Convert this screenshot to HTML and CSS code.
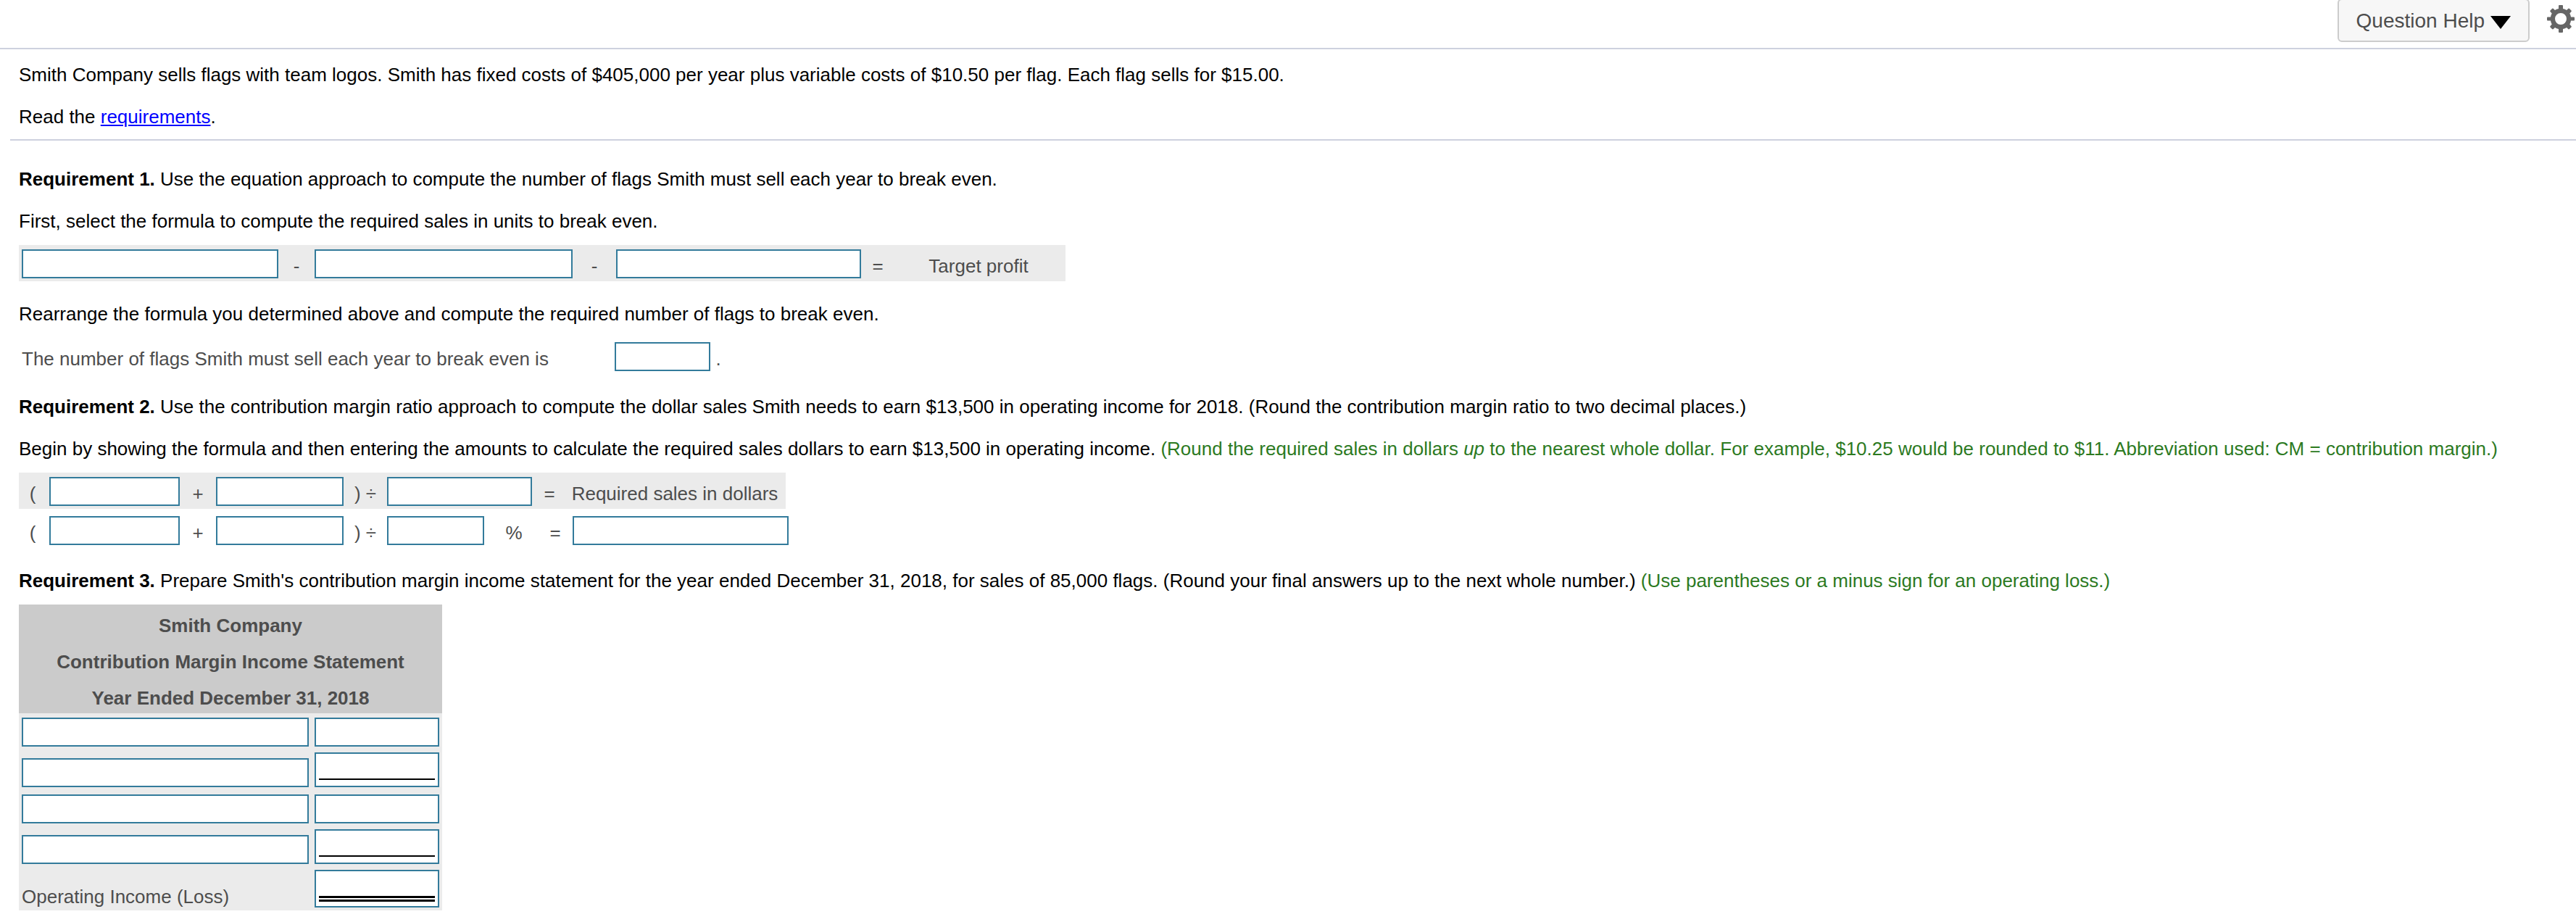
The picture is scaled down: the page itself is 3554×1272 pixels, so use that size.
FILE: index.html
```
<!DOCTYPE html>
<html lang="en">
<head>
  <meta charset="UTF-8">
  <title>Question</title>
  <meta name="viewport" content="width=device-width, initial-scale=1.0">
  <link rel="stylesheet" href="styles.css">
</head>
<body>
  <header class="toolbar">
    <button type="button" class="help-button">Question Help
      <svg class="arrow" viewBox="0 0 28 18"><path d="M0 0H28L14 18Z"/></svg>
    </button>
    <button type="button" class="settings" aria-label="Settings">
      <svg viewBox="0 0 40 40">
        <path class="gear" fill-rule="evenodd" d="M17 2Q17 1 18 1H22Q23 1 23 2V6Q26 6.600 28 8L30.500 5.800Q31.200 5.200 32 6L34.500 8.500Q35.200 9.200 34.500 10L32.300 12.500Q33.700 15 34 17.500H38Q39 17.500 39 18.500V21.500Q39 22.500 38 22.500H34Q33.700 25 32.300 27.500L34.500 30Q35.200 30.800 34.500 31.500L32 34Q31.200 34.800 30.500 34.200L28 32Q26 33.400 23 34V38Q23 39 22 39H18Q17 39 17 38V34Q14 33.400 12 32L9.500 34.200Q8.800 34.800 8 34L5.500 31.500Q4.800 30.800 5.500 30L7.700 27.500Q6.300 25 6 22.500H2Q1 22.500 1 21.500V18.500Q1 17.500 2 17.500H6Q6.300 15 7.700 12.500L5.500 10Q4.800 9.200 5.500 8.500L8 6Q8.800 5.200 9.500 5.800L12 8Q14 6.600 17 6ZM20 12A8 8 0 1 0 20 28A8 8 0 1 0 20 12Z"/>
      </svg>
    </button>
  </header>

  <section class="intro">
    <p>Smith Company sells flags with team logos. Smith has fixed costs of $405,000 per year plus variable costs of $10.50 per flag. Each flag sells for $15.00.</p>
    <p>Read the <a href="#requirements">requirements</a>.</p>
  </section>

  <main class="question" id="requirements">
    <p><b>Requirement 1.</b> Use the equation approach to compute the number of flags Smith must sell each year to break even.</p>
    <p>First, select the formula to compute the required sales in units to break even.</p>

    <div class="formula profit shaded">
      <input type="text" aria-label="First formula item">
      <span>-</span>
      <input type="text" aria-label="Second formula item">
      <span>-</span>
      <input type="text" aria-label="Third formula item">
      <span>=</span>
      <span>Target profit</span>
    </div>

    <p>Rearrange the formula you determined above and compute the required number of flags to break even.</p>

    <div class="formula units">
      <label for="flags">The number of flags Smith must sell each year to break even is</label>
      <input type="text" id="flags">
      <span>.</span>
    </div>

    <p><b>Requirement 2.</b> Use the contribution margin ratio approach to compute the dollar sales Smith needs to earn $13,500 in operating income for 2018. (Round the contribution margin ratio to two decimal places.)</p>
    <p>Begin by showing the formula and then entering the amounts to calculate the required sales dollars to earn $13,500 in operating income. <span class="hint">(Round the required sales in dollars <i>up</i> to the nearest whole dollar. For example, $10.25 would be rounded to $11. Abbreviation used: CM = contribution margin.)</span></p>

    <div class="formulas">
      <div class="formula sales shaded">
        <span class="before-box">(</span>
        <input type="text" aria-label="First item">
        <span>+</span>
        <input type="text" aria-label="Second item">
        <span>) ÷</span>
        <input type="text" aria-label="Divisor">
        <span>=</span>
        <span>Required sales in dollars</span>
      </div>
      <div class="formula sales amounts">
        <span class="before-box">(</span>
        <input type="text" aria-label="First amount">
        <span>+</span>
        <input type="text" aria-label="Second amount">
        <span>) ÷</span>
        <input type="text" aria-label="Ratio">
        <span>%</span>
        <span class="before-box">=</span>
        <input type="text" aria-label="Required sales in dollars">
      </div>
    </div>

    <p><b>Requirement 3.</b> Prepare Smith's contribution margin income statement for the year ended December 31, 2018, for sales of 85,000 flags. (Round your final answers up to the next whole number.) <span class="hint">(Use parentheses or a minus sign for an operating loss.)</span></p>

    <table class="statement">
      <thead>
        <tr><th colspan="2">Smith Company</th></tr>
        <tr><th colspan="2">Contribution Margin Income Statement</th></tr>
        <tr><th colspan="2">Year Ended December 31, 2018</th></tr>
      </thead>
      <tbody>
        <tr>
          <td class="account"><input type="text" aria-label="Account 1"></td>
          <td class="amount"><input type="text" aria-label="Amount 1"></td>
        </tr>
        <tr>
          <td class="account"><input type="text" aria-label="Account 2"></td>
          <td class="amount"><div class="total"><input type="text" aria-label="Amount 2"></div></td>
        </tr>
        <tr>
          <td class="account"><input type="text" aria-label="Account 3"></td>
          <td class="amount"><input type="text" aria-label="Amount 3"></td>
        </tr>
        <tr>
          <td class="account"><input type="text" aria-label="Account 4"></td>
          <td class="amount"><div class="total"><input type="text" aria-label="Amount 4"></div></td>
        </tr>
        <tr>
          <td class="account"><label for="income">Operating Income (Loss)</label></td>
          <td class="amount"><div class="total grand"><input type="text" id="income"></div></td>
        </tr>
      </tbody>
    </table>
  </main>
</body>
</html>
```
FILE: styles.css
```
* {
  box-sizing: border-box;
}

body {
  margin: 0;
  font-family: Arial, "Liberation Sans", sans-serif;
  font-size: 26px;
  line-height: 30px;
  color: #000;
  background: #fff;
}

p {
  margin: 0 0 28px;
}

a {
  color: #0000ff;
}

input {
  display: block;
  width: 100%;
  height: 40px;
  padding: 0 6px;
  border: 2px solid #337b9b;
  border-radius: 0;
  background: #fff;
  font: inherit;
}

.hint {
  color: #2c7a1f;
}

/* top bar */
.toolbar {
  display: flex;
  justify-content: flex-end;
  align-items: flex-start;
  height: 68px;
  border-bottom: 2px solid #cdd1de;
}

.help-button {
  display: flex;
  align-items: center;
  gap: 8px;
  height: 60px;
  margin-top: -2px;
  padding: 2px 24px 0;
  border: 2px solid #ccc;
  border-radius: 6px;
  background: #f7f7f7;
  color: #4d4d4d;
  font: 28px Arial, "Liberation Sans", sans-serif;
}

.arrow {
  width: 28px;
  height: 18px;
  margin-top: 4px;
}

.settings {
  width: 40px;
  height: 40px;
  margin: 6px 1px 0 23px;
  padding: 0;
  border: 0;
  background: none;
}

.settings svg {
  display: block;
}

.gear {
  fill: #666;
}

.intro {
  margin-left: 14px;
  padding: 20px 12px 16px;
  border-bottom: 2px solid #cdd1de;
}

.intro p:last-child {
  margin-bottom: 0;
}

.question {
  padding: 38px 26px 16px;
}

/* answer rows */
.formula {
  display: grid;
  justify-content: start;
  width: fit-content;
  height: 50px;
  padding: 6px 4px 4px;
  color: #4d4d4d;
}

.formula span,
.formula label {
  padding-top: 8px;
}

.formula span {
  text-align: center;
}

.formula .before-box {
  padding-right: 8px;
}

.shaded {
  background: #ebebeb;
}

.profit,
.units,
.formulas {
  margin: -10px 0 30px;
}

.profit {
  grid-template-columns: 354px 50px 356px 60px 338px 46px 232px;
}

.units {
  grid-template-columns: 818px 132px 22px;
}

.formulas {
  display: grid;
  gap: 4px;
}

.sales {
  grid-template-columns: 38px 180px 50px 176px 60px 200px 48px 298px;
}

.amounts {
  grid-template-columns: 38px 180px 50px 176px 60px 134px 82px 40px 298px;
}

/* income statement */
.statement {
  width: 584px;
  margin-top: -10px;
  border-collapse: collapse;
  background: #ebebeb;
  color: #4d4d4d;
}

.statement th {
  height: 50px;
  padding: 8px 4px 0;
  background: #cbcbcb;
}

.statement td {
  padding: 4px;
  vertical-align: bottom;
}

.statement tr:nth-child(odd) td {
  padding-top: 6px;
}

.statement tr:last-child td {
  padding-top: 4px;
}

.account {
  width: 404px;
}

.total {
  padding: 0 4px 8px;
  border: 2px solid #337b9b;
  background: #fff;
}

.total input {
  height: 36px;
  border: 0;
  border-bottom: 2px solid #000;
}

.grand {
  padding-bottom: 6px;
}

.grand input {
  height: 42px;
  border-bottom: 8px double #000;
}
```
